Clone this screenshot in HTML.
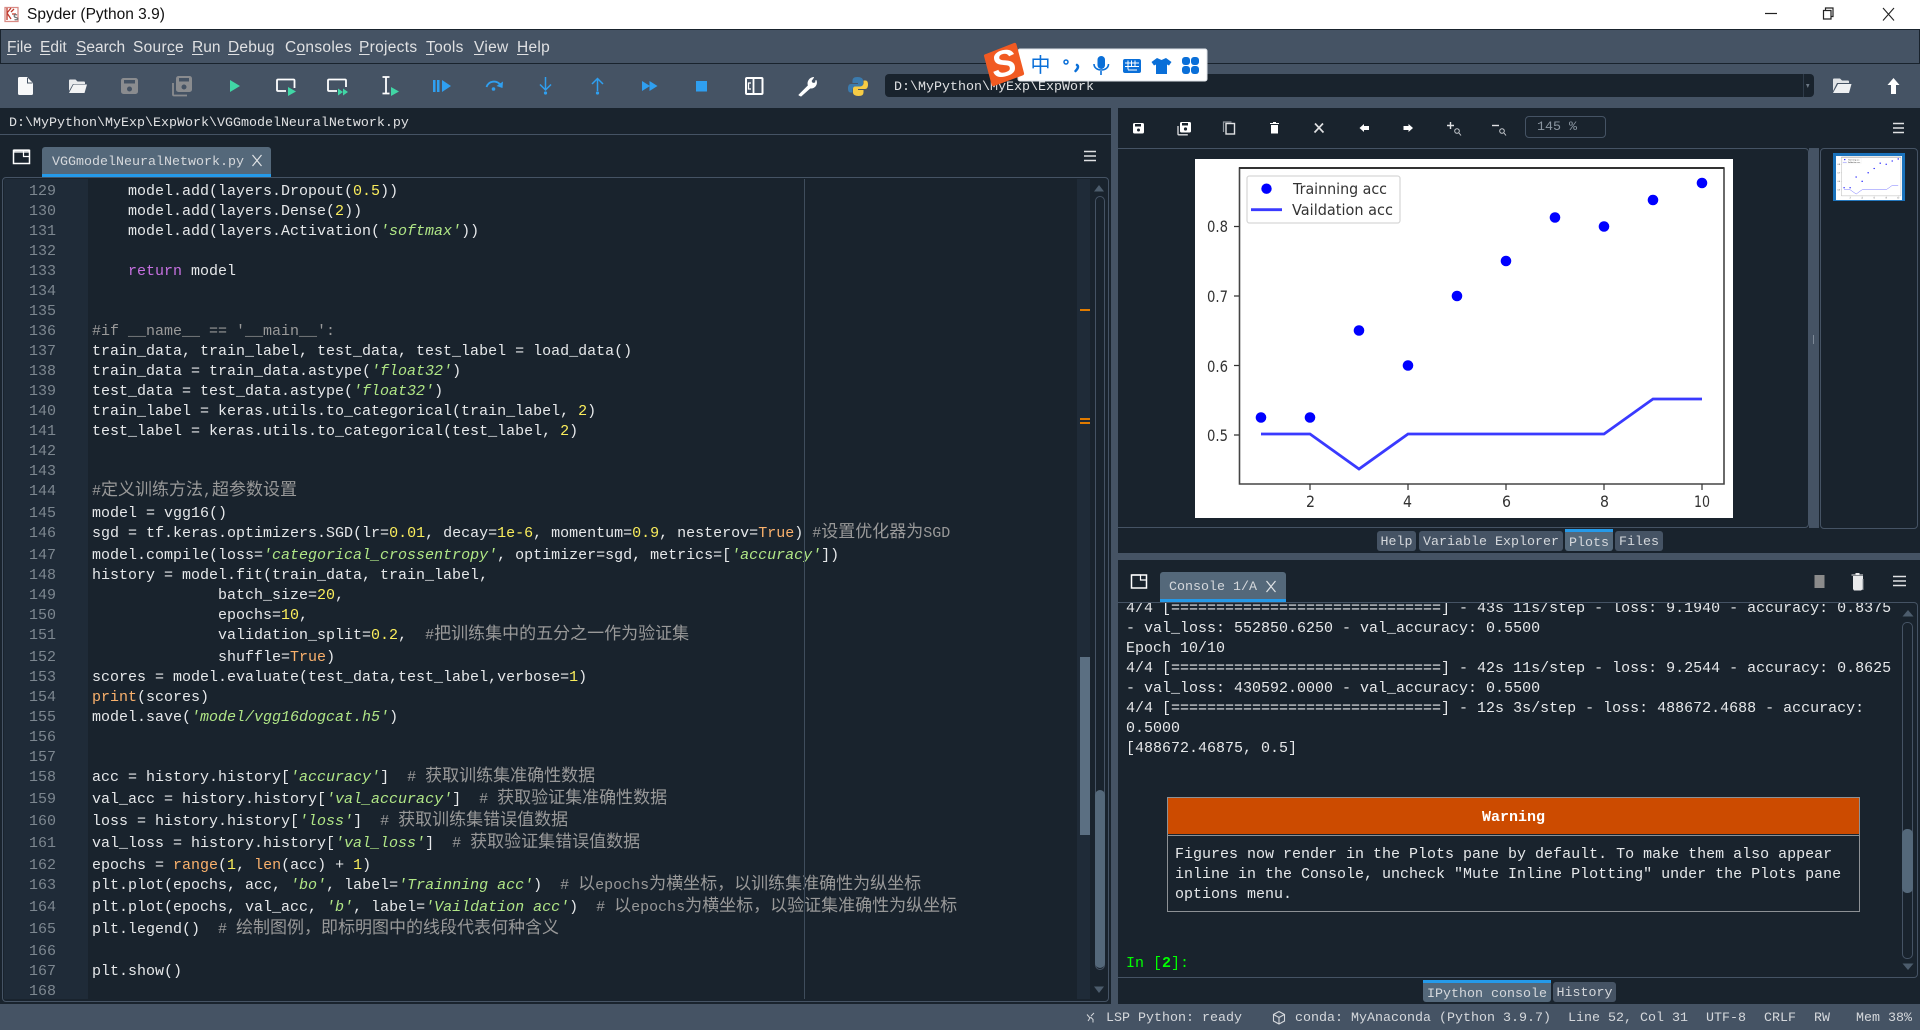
<!DOCTYPE html>
<html><head><meta charset="utf-8"><title>Spyder (Python 3.9)</title>
<style>
html,body{margin:0;padding:0;width:1920px;height:1030px;overflow:hidden;background:#19232d}
div,span{box-sizing:border-box}
.a{position:absolute}
.m{font-family:"Liberation Mono","DejaVu Sans Mono",monospace}
.ui{font-family:"Liberation Sans",sans-serif}
.menu span{position:absolute;top:38px;font:15.5px/20px "Liberation Sans",sans-serif;color:#e0e1e3;white-space:pre}
.menu u{text-underline-offset:2px}
#code{position:absolute;left:0;top:182px;width:1076px;height:817px;overflow:hidden;font:15px/20px "Liberation Mono",monospace;color:#e6e8ea}
.l{position:relative;height:20px;line-height:20px;padding-left:92px;white-space:pre}
.l.x{height:22px}
.l i.g{position:absolute;left:0;width:56px;text-align:right;font-style:normal;color:#7d8790}
.s{color:#b0e686;font-style:italic}
.k{color:#c670e0}
.b{color:#fab16c}
.n{color:#faed5c}
.c{color:#999}
.z{font-family:"Noto Sans CJK SC","WenQuanYi Zen Hei",sans-serif;font-size:17px;line-height:0;color:#999}
.tab{position:absolute;background:#455364;border-radius:3px 3px 0 0;font:13.33px/24px "Liberation Mono",monospace;color:#d5d8dc;text-align:center;white-space:pre;overflow:hidden}
.st{position:absolute;top:1009px;font:13.33px/20px "Liberation Mono",monospace;color:#d5d8dc;white-space:pre}
#con{position:absolute;left:1126px;top:603px;width:770px;height:372px;overflow:hidden;font:15px/20px "Liberation Mono",monospace;color:#e6e8ea}
#con div{position:relative;top:-4px;height:20px;white-space:pre}
</style></head>
<body>
<!-- title -->
<div class="a" style="left:0;top:0;width:1920px;height:29px;background:#fff"></div>
<div class="a ui" style="left:27px;top:5px;font-size:15.5px;line-height:20px;color:#111;white-space:pre">Spyder (Python 3.9)</div>
<!-- menu -->
<div class="a" style="left:0;top:29px;width:1920px;height:79px;background:#455364"></div>
<div class="a" style="left:0;top:29px;width:1920px;height:1px;background:#19232d"></div>
<div class="a" style="left:0;top:63px;width:1920px;height:1px;background:#19232d"></div>
<div class="a" style="left:0;top:29px;width:1px;height:35px;background:#19232d"></div>
<div class="a" style="left:1919px;top:29px;width:1px;height:35px;background:#19232d"></div>
<div class="menu">
<span style="left:7px"><u>F</u>ile</span>
<span style="left:40px"><u>E</u>dit</span>
<span style="left:76px"><u>S</u>earch</span>
<span style="left:133px;letter-spacing:.3px">Sour<u>c</u>e</span>
<span style="left:192px"><u>R</u>un</span>
<span style="left:228px;letter-spacing:.2px"><u>D</u>ebug</span>
<span style="left:285px;letter-spacing:.3px">C<u>o</u>nsoles</span>
<span style="left:359px;letter-spacing:.3px"><u>P</u>rojects</span>
<span style="left:426px;letter-spacing:.3px"><u>T</u>ools</span>
<span style="left:474px;letter-spacing:.3px"><u>V</u>iew</span>
<span style="left:517px;letter-spacing:.3px"><u>H</u>elp</span>
</div>
<!-- working dir -->
<div class="a m" style="left:885px;top:74px;width:929px;height:23px;background:#19232d;border-radius:4px;color:#e0e1e3;font-size:13.33px;line-height:27px;padding-left:9px;white-space:pre">D:\MyPython\MyExp\ExpWork</div>
<div class="a" style="left:1803px;top:74px;width:1px;height:23px;background:#2e3b49"></div>
<!-- path bar -->
<div class="a m" style="left:9px;top:114px;font-size:13.33px;line-height:20px;color:#e0e1e3;white-space:pre">D:\MyPython\MyExp\ExpWork\VGGmodelNeuralNetwork.py</div>
<div class="a" style="left:0;top:134px;width:1111px;height:1px;background:#455364"></div>
<!-- splitters -->
<div class="a" style="left:1111px;top:108px;width:7px;height:896px;background:#455364"></div>
<!-- editor tab -->
<div class="tab" style="left:42px;top:147px;width:229px;height:30px;background:#54687a;border-bottom:3px solid #259ae9;line-height:32px;text-align:left;padding-left:10px;color:#d5d8dc">VGGmodelNeuralNetwork.py</div>
<!-- editor frame -->
<div class="a" style="left:2px;top:177px;width:1107px;height:825px;border:1px solid #455364;border-radius:4px"></div>
<div class="a" style="left:4px;top:179px;width:84px;height:820px;background:#1f2b38"></div>
<div class="a" style="left:1077px;top:179px;width:13px;height:820px;background:#1f2b38"></div>
<div id="code">
<div class="l"><i class="g">129</i>    model.add(layers.Dropout(<span class="n">0.5</span>))</div>
<div class="l"><i class="g">130</i>    model.add(layers.Dense(<span class="n">2</span>))</div>
<div class="l"><i class="g">131</i>    model.add(layers.Activation(<span class="s">'softmax'</span>))</div>
<div class="l"><i class="g">132</i></div>
<div class="l"><i class="g">133</i>    <span class="k">return</span> model</div>
<div class="l"><i class="g">134</i></div>
<div class="l"><i class="g">135</i></div>
<div class="l"><i class="g">136</i><span class="c">#if __name__ == '__main__':</span></div>
<div class="l"><i class="g">137</i>train_data, train_label, test_data, test_label = load_data()</div>
<div class="l"><i class="g">138</i>train_data = train_data.astype(<span class="s">'float32'</span>)</div>
<div class="l"><i class="g">139</i>test_data = test_data.astype(<span class="s">'float32'</span>)</div>
<div class="l"><i class="g">140</i>train_label = keras.utils.to_categorical(train_label, <span class="n">2</span>)</div>
<div class="l"><i class="g">141</i>test_label = keras.utils.to_categorical(test_label, <span class="n">2</span>)</div>
<div class="l"><i class="g">142</i></div>
<div class="l"><i class="g">143</i></div>
<div class="l x"><i class="g">144</i><span class="c">#<span class="z">定义训练方法</span>,<span class="z">超参数设置</span></span></div>
<div class="l"><i class="g">145</i>model = vgg16()</div>
<div class="l x"><i class="g">146</i>sgd = tf.keras.optimizers.SGD(lr=<span class="n">0.01</span>, decay=<span class="n">1e-6</span>, momentum=<span class="n">0.9</span>, nesterov=<span class="b">True</span>) <span class="c">#<span class="z">设置优化器为</span>SGD</span></div>
<div class="l"><i class="g">147</i>model.compile(loss=<span class="s">'categorical_crossentropy'</span>, optimizer=sgd, metrics=[<span class="s">'accuracy'</span>])</div>
<div class="l"><i class="g">148</i>history = model.fit(train_data, train_label,</div>
<div class="l"><i class="g">149</i>              batch_size=<span class="n">20</span>,</div>
<div class="l"><i class="g">150</i>              epochs=<span class="n">10</span>,</div>
<div class="l x"><i class="g">151</i>              validation_split=<span class="n">0.2</span>,  <span class="c">#<span class="z">把训练集中的五分之一作为验证集</span></span></div>
<div class="l"><i class="g">152</i>              shuffle=<span class="b">True</span>)</div>
<div class="l"><i class="g">153</i>scores = model.evaluate(test_data,test_label,verbose=<span class="n">1</span>)</div>
<div class="l"><i class="g">154</i><span class="b">print</span>(scores)</div>
<div class="l"><i class="g">155</i>model.save(<span class="s">'model/vgg16dogcat.h5'</span>)</div>
<div class="l"><i class="g">156</i></div>
<div class="l"><i class="g">157</i></div>
<div class="l x"><i class="g">158</i>acc = history.history[<span class="s">'accuracy'</span>]  <span class="c"># <span class="z">获取训练集准确性数据</span></span></div>
<div class="l x"><i class="g">159</i>val_acc = history.history[<span class="s">'val_accuracy'</span>]  <span class="c"># <span class="z">获取验证集准确性数据</span></span></div>
<div class="l x"><i class="g">160</i>loss = history.history[<span class="s">'loss'</span>]  <span class="c"># <span class="z">获取训练集错误值数据</span></span></div>
<div class="l x"><i class="g">161</i>val_loss = history.history[<span class="s">'val_loss'</span>]  <span class="c"># <span class="z">获取验证集错误值数据</span></span></div>
<div class="l"><i class="g">162</i>epochs = <span class="b">range</span>(<span class="n">1</span>, <span class="b">len</span>(acc) + <span class="n">1</span>)</div>
<div class="l x"><i class="g">163</i>plt.plot(epochs, acc, <span class="s">'bo'</span>, label=<span class="s">'Trainning acc'</span>)  <span class="c"># <span class="z">以</span>epochs<span class="z">为横坐标，以训练集准确性为纵坐标</span></span></div>
<div class="l x"><i class="g">164</i>plt.plot(epochs, val_acc, <span class="s">'b'</span>, label=<span class="s">'Vaildation acc'</span>)  <span class="c"># <span class="z">以</span>epochs<span class="z">为横坐标，以验证集准确性为纵坐标</span></span></div>
<div class="l x"><i class="g">165</i>plt.legend()  <span class="c"># <span class="z">绘制图例，即标明图中的线段代表何种含义</span></span></div>
<div class="l"><i class="g">166</i></div>
<div class="l"><i class="g">167</i>plt.show()</div>
<div class="l"><i class="g">168</i></div>
</div>
<div class="a" style="left:804px;top:179px;width:1px;height:820px;background:#3f4d5c"></div>
<!-- flags and scrollbars -->
<div class="a" style="left:1080px;top:657px;width:10px;height:178px;background:#5b6f82"></div>
<div class="a" style="left:1080px;top:309px;width:10px;height:2px;background:#e07b00"></div>
<div class="a" style="left:1080px;top:418px;width:10px;height:2px;background:#e07b00"></div>
<div class="a" style="left:1080px;top:422px;width:10px;height:2px;background:#e07b00"></div>
<div class="a" style="left:1095px;top:196px;width:10px;height:774px;border:1px solid #455364;border-radius:5px"></div>
<div class="a" style="left:1095px;top:790px;width:10px;height:178px;background:#54687a;border-radius:5px"></div>
<!-- plots pane -->
<div class="a m" style="left:1525px;top:116px;width:81px;height:22px;border:1px solid #455364;border-radius:4px;font-size:13.33px;line-height:22px;color:#8b96a1;padding-left:11px;white-space:pre">145 %</div>
<div class="a" style="left:1118px;top:148px;width:691px;height:380px;border:1px solid #455364;border-left:0;border-radius:0 4px 4px 0"></div>
<div class="a" style="left:1809px;top:148px;width:10px;height:380px;background:#455364"></div>
<div class="a" style="left:1820px;top:148px;width:98px;height:381px;border:1px solid #455364;border-radius:4px"></div>
<div class="a" style="left:1813px;top:335px;width:1px;height:9px;background:#7c8896"></div>
<div class="a" style="left:1833px;top:153px;width:72px;height:48px;background:#fff;border:3px solid #1a72bb"></div>
<div class="tab" style="left:1377px;top:531px;width:39px;height:20px;border-radius:3px">Help</div>
<div class="tab" style="left:1419px;top:531px;width:144px;height:20px;border-radius:3px">Variable Explorer</div>
<div class="tab" style="left:1565px;top:529px;width:48px;height:22px;background:#54687a;border-top:3px solid #259ae9;border-radius:0 0 3px 3px;line-height:23px">Plots</div>
<div class="tab" style="left:1615px;top:531px;width:48px;height:20px;border-radius:3px">Files</div>
<div class="a" style="left:1118px;top:553px;width:802px;height:7px;background:#455364"></div>
<!-- console -->
<div class="tab" style="left:1160px;top:572px;width:126px;height:30px;background:#54687a;border-bottom:3px solid #259ae9;line-height:32px;text-align:left;padding-left:9px">Console 1/A</div>
<div class="a" style="left:1118px;top:602px;width:800px;height:376px;border:1px solid #455364;border-left:0;border-radius:0 4px 4px 0"></div>
<div id="con">
<div>4/4 [==============================] - 43s 11s/step - loss: 9.1940 - accuracy: 0.8375</div>
<div>- val_loss: 552850.6250 - val_accuracy: 0.5500</div>
<div>Epoch 10/10</div>
<div>4/4 [==============================] - 42s 11s/step - loss: 9.2544 - accuracy: 0.8625</div>
<div>- val_loss: 430592.0000 - val_accuracy: 0.5500</div>
<div>4/4 [==============================] - 12s 3s/step - loss: 488672.4688 - accuracy:</div>
<div>0.5000</div>
<div>[488672.46875, 0.5]</div>
</div>
<div class="a" style="left:1167px;top:797px;width:693px;height:115px;border:1px solid #8d9195"></div>
<div class="a m" style="left:1168px;top:798px;width:691px;height:36px;background:#cc4b00;color:#fff;font-size:15px;font-weight:bold;line-height:40px;text-align:center">Warning</div>
<div class="a" style="left:1168px;top:835px;width:691px;height:1px;background:#8d9195"></div>
<div class="a m" style="left:1175px;top:845px;width:680px;font-size:15px;line-height:20px;color:#e6e8ea;white-space:pre">Figures now render in the Plots pane by default. To make them also appear
inline in the Console, uncheck "Mute Inline Plotting" under the Plots pane
options menu.</div>
<div class="a m" style="left:1126px;top:954px;font-size:15px;line-height:20px;color:#00ff00;white-space:pre">In [<b>2</b>]:</div>
<div class="a" style="left:1902px;top:622px;width:11px;height:337px;border:1px solid #455364;border-radius:5px"></div>
<div class="a" style="left:1902px;top:829px;width:11px;height:64px;background:#54687a;border-radius:5px"></div>
<div class="tab" style="left:1423px;top:980px;width:128px;height:22px;background:#54687a;border-top:3px solid #259ae9;border-radius:0 0 3px 3px;line-height:23px">IPython console</div>
<div class="tab" style="left:1553px;top:982px;width:63px;height:20px;border-radius:3px">History</div>
<!-- status -->
<div class="a" style="left:0;top:1004px;width:1920px;height:26px;background:#455364"></div>
<div class="st" style="left:1106px">LSP Python: ready</div>
<div class="st" style="left:1295px">conda: MyAnaconda (Python 3.9.7)</div>
<div class="st" style="left:1568px">Line 52, Col 31</div>
<div class="st" style="left:1706px">UTF-8</div>
<div class="st" style="left:1764px">CRLF</div>
<div class="st" style="left:1814px">RW</div>
<div class="st" style="left:1856px">Mem 38%</div>

<!-- icons + chart -->
<svg class="a" style="left:0;top:0" width="1920" height="1030" viewBox="0 0 1920 1030" xmlns="http://www.w3.org/2000/svg">
<!-- app icon -->
<g fill="none" stroke="#c0392b" stroke-width="1.3"><path d="M5 7.500h13v14H5z" stroke="#d98b85"/><path d="M7 8v12M7 13l4-5M7 13l4 6M14 9l-3 3M12 14h4"/></g>
<path d="M17 15c-3-1.500-4 2-1 2.500s2 3-1.500 2" fill="none" stroke="#777" stroke-width="1.300"/>
<!-- window controls -->
<path d="M1765 13.500h12" stroke="#222" stroke-width="1.200"/>
<path d="M1823.500 10.500h7.500v8.500h-7.500zM1825.500 10.500v-2.500h7.500v8.500h-2" fill="none" stroke="#222" stroke-width="1.200"/>
<path d="M1883 8l11 12.500M1894 8l-11 12.500" stroke="#222" stroke-width="1.100"/>
<!-- toolbar -->
<path d="M19.500 77H27l6 6v10.500a1.500 1.500 0 0 1-1.500 1.500h-12a1.500 1.500 0 0 1-1.500-1.500v-15A1.500 1.500 0 0 1 19.500 77z" fill="#f7f8f9"/>
<path d="M27.500 78v5h5" fill="none" stroke="#455364" stroke-width="1"/>
<path d="M69 91V80.500a1 1 0 0 1 1-1h5.500l2 2H84a1 1 0 0 1 1 1v1.500H73z" fill="#e8eaec"/>
<path d="M73.500 84.500H87L84.500 93H69z" fill="#f2f3f4"/>
<rect x="121" y="78" width="17" height="16" rx="2.500" fill="#8a8c8f"/>
<rect x="124" y="80" width="11" height="3.500" fill="#455364"/><circle cx="129.500" cy="89" r="2.500" fill="#455364"/>
<path d="M173 83v11.500a1 1 0 0 0 1 1h13" fill="none" stroke="#8a8c8f" stroke-width="1.800"/>
<rect x="176" y="76" width="16" height="16" rx="2.500" fill="#8a8c8f"/>
<rect x="179" y="78" width="10" height="3.500" fill="#455364"/><circle cx="184" cy="87" r="2.500" fill="#455364"/>
<path d="M230 80l10 6-10 6z" fill="#41d6a5"/>
<path d="M286 91h-8a1 1 0 0 1-1-1v-9.500a1 1 0 0 1 1-1h15.500a1 1 0 0 1 1 1V88" fill="none" stroke="#fff" stroke-width="1.800"/>
<path d="M288 87l8 4.500-8 4.500z" fill="#41d6a5"/>
<path d="M337 91h-8a1 1 0 0 1-1-1v-9.500a1 1 0 0 1 1-1h16a1 1 0 0 1 1 1V87" fill="none" stroke="#fff" stroke-width="1.800"/>
<path d="M338 88.500l5 3.500-5 3.500zM343 88.500l5 3.500-5 3.500z" fill="#41d6a5"/>
<path d="M382.500 77h7M382.500 93.500h7M386 77v16.500" fill="none" stroke="#fff" stroke-width="1.800"/>
<path d="M391 87l8 4.500-8 4.500z" fill="#41d6a5"/>
<path d="M433 80h2.500v12H433zM437 80h2.500v12H437zM442 80l9 6-9 6z" fill="#2f9ff0"/>
<path d="M486.500 87c2-6 10-7.500 14-2" fill="none" stroke="#2f9ff0" stroke-width="1.800"/>
<path d="M503 81.500l-.5 6.500-6-2z" fill="#2f9ff0"/><circle cx="493.500" cy="89" r="1.800" fill="#2f9ff0"/>
<path d="M545.500 77v13M540 84.500l5.500 5.500 5.500-5.500" fill="none" stroke="#2f9ff0" stroke-width="1.500"/><circle cx="545.500" cy="93" r="1.600" fill="#2f9ff0"/>
<path d="M597.500 91V79M592 84l5.500-5.500L603 84" fill="none" stroke="#2f9ff0" stroke-width="1.500"/><circle cx="597.500" cy="93" r="1.600" fill="#2f9ff0"/>
<path d="M642 81l8 5-8 5zM649.500 81l8 5-8 5z" fill="#2f9ff0"/>
<rect x="696" y="81" width="11" height="10.500" fill="#2f9ff0"/>
<rect x="746" y="78" width="16.500" height="16" rx="1" fill="none" stroke="#fff" stroke-width="2"/>
<path d="M753.500 78v16" stroke="#fff" stroke-width="1.800"/>
<path d="M751 83h-2.500v6h2.500" fill="none" stroke="#fff" stroke-width="1.300"/>
<path d="M799 95l9.500-9.500c-1.500-3.500 1-7.500 5-8l-2.500 3.500 1.500 2.500 3-.5 .5-2.500c1.500 3.500-1 8-6 7.500L801 96z" fill="#fff" stroke="#fff" stroke-width="1" stroke-linejoin="round"/>
<path d="M857.500 77c-4 0-5 1.500-5 4v2h5.500v1h-7c-2.500 0-3 2.500-3 4.500s.5 4 2.500 4h2v-2.500c0-2 1.500-3.500 3.500-3.500h4.500c1.800 0 2.500-1 2.500-2.500v-3.500c0-2-2-3.500-5.500-3.500z" fill="#3b7bae"/>
<path d="M858.500 96c4 0 5-1.500 5-4v-2h-5.500v-1h7c2.500 0 3-2.500 3-4.500s-.5-4-2.500-4h-2v2.500c0 2-1.500 3.500-3.500 3.500h-4.500c-1.800 0-2.500 1-2.500 2.500v3.500c0 2 2 3.500 5.500 3.500z" fill="#f6cc45"/>
<path d="M1806 84l3.500 0-1.700 4z" fill="#6c7885"/>
<path d="M1833 91V79.500a1 1 0 0 1 1-1h6l2 2h6a1 1 0 0 1 1 1V83h-12z" fill="#e0e3e6"/>
<path d="M1838 84h13.500l-2.500 9h-16z" fill="#eef0f2"/>
<path d="M1893.500 78l6 7h-3.500v9h-5v-9h-3.500z" fill="#fff"/>
<!-- plots toolbar -->
<rect x="1133" y="123" width="11" height="10.500" rx="1.500" fill="#fff"/><rect x="1135" y="124" width="6" height="2.500" fill="#19232d"/><circle cx="1138.500" cy="130" r="1.500" fill="#19232d"/>
<path d="M1178 126v8a.8.8 0 0 0 .8.800h9" fill="none" stroke="#e0e1e3" stroke-width="1.300"/>
<rect x="1180" y="122" width="11" height="10.500" rx="1.500" fill="#fff"/><rect x="1182" y="123" width="6" height="2.500" fill="#19232d"/><circle cx="1185.500" cy="129" r="1.600" fill="#19232d"/>
<path d="M1223.500 132v-10h8" fill="none" stroke="#8e959c" stroke-width="1.200"/><rect x="1226" y="123.500" width="8.500" height="10.500" fill="none" stroke="#e0e1e3" stroke-width="1.400"/>
<path d="M1271 125h7v8.500h-7z" fill="#fff"/><path d="M1270 123h9v1h-9zM1273 122h3v1h-3z" fill="#fff"/>
<path d="M1315 123.500l8.500 9M1323 123.500l-8.500 9" stroke="#e0e1e3" stroke-width="1.700"/>
<path d="M1359.500 128l4.500-4v2h5v4h-5v2z" fill="#fff"/>
<path d="M1413 128l-4.500-4v2h-5v4h5v2z" fill="#fff"/>
<path d="M1447 125.500h7M1450.500 122v7" stroke="#e0e1e3" stroke-width="1.400"/><circle cx="1457" cy="131" r="2.300" fill="none" stroke="#c5c9ce" stroke-width="1"/><path d="M1459 133l2 2.500" stroke="#c5c9ce"/>
<path d="M1492 125.500h7" stroke="#e0e1e3" stroke-width="1.400"/><circle cx="1502" cy="131" r="2.300" fill="none" stroke="#c5c9ce" stroke-width="1"/><path d="M1504 133l2 2.500" stroke="#c5c9ce"/>
<!-- hamburgers -->
<g stroke="#e0e1e3" stroke-width="1.500"><path d="M1084 151.500h12M1084 156h12M1084 160.500h12"/><path d="M1893 123.500h11M1893 128h11M1893 132.500h11"/><path d="M1893 576.500h13M1893 581h13M1893 585.500h13"/></g>
<!-- new tab icons -->
<path d="M13.500 150.500h16v13h-16z" fill="none" stroke="#fff" stroke-width="1.500"/>
<path d="M14 150h15v2H14zM23.500 150v6.500h6" fill="none" stroke="#fff" stroke-width="1.200"/>
<path d="M1131.500 575h15v13h-15z" fill="none" stroke="#fff" stroke-width="1.500"/><path d="M1132 575h8.500v5h6" fill="none" stroke="#fff" stroke-width="1.200"/>
<!-- close x -->
<path d="M252.500 155l9 11M261.500 155l-9 11" stroke="#dfe2e5" stroke-width="1.200"/>
<path d="M1266.500 581l9 11M1275.500 581l-9 11" stroke="#dfe2e5" stroke-width="1.200"/>
<!-- console toolbar -->
<rect x="1814.500" y="575" width="10" height="13" fill="#8b8b8b"/>
<path d="M1853 576h10v13l-2 1.500h-7l-1-1.500z" fill="#e9eaec"/><path d="M1851.500 574.500h11.500v1h-11.500zM1855.500 573h4v1.500h-4z" fill="#e9eaec"/><path d="M1863 579v11" stroke="#8e959c"/>
<!-- scrollbar arrows -->
<g fill="#4c5c6c"><path d="M1099 185l5 6.500h-10z"/><path d="M1099 993l5-6.500h-10z"/><path d="M1908 610l5.500 6.500h-11z"/><path d="M1908 970l5.500-6.500h-11z"/></g>
<!-- status icons -->
<path d="M1087 1014.500l3 3.500-2 3M1094 1013l-3 3M1090.500 1017l2.500 2.500v3" fill="none" stroke="#d5d8dc" stroke-width="1"/>
<path d="M1279 1011.500l5.500 3v6.500l-5.500 3-5.500-3v-6.500zM1273.500 1014.500l5.500 3 5.500-3M1279 1017.500v6.500" fill="none" stroke="#d5d8dc" stroke-width="1.100"/>
<!-- chart -->
<g id="fig">
<rect x="1195" y="159" width="538" height="359" fill="#fff"/>
<path d="M1239.500 168v316H1724V168z" fill="none" stroke="#454545" stroke-width="1.600"/>
<path d="M1239 168h485" stroke="#333" stroke-width="2"/>
<path d="M1234 226.500h5M1234 296h5M1234 365.500h5M1234 435h5M1310 484v6M1408 484v6M1506 484v6M1604 484v6M1702 484v6" stroke="#333" stroke-width="1.200"/>
<g font-family="DejaVu Sans,sans-serif" font-size="16" fill="#333">
<text x="1207" y="232" textLength="21" lengthAdjust="spacingAndGlyphs">0.8</text>
<text x="1207" y="302" textLength="21" lengthAdjust="spacingAndGlyphs">0.7</text>
<text x="1207" y="372" textLength="21" lengthAdjust="spacingAndGlyphs">0.6</text>
<text x="1207" y="441" textLength="21" lengthAdjust="spacingAndGlyphs">0.5</text>
<text x="1306" y="507" textLength="9" lengthAdjust="spacingAndGlyphs">2</text>
<text x="1403" y="507" textLength="9" lengthAdjust="spacingAndGlyphs">4</text>
<text x="1502" y="507" textLength="9" lengthAdjust="spacingAndGlyphs">6</text>
<text x="1600" y="507" textLength="9" lengthAdjust="spacingAndGlyphs">8</text>
<text x="1694" y="507" textLength="16" lengthAdjust="spacingAndGlyphs">10</text>
</g>
<rect x="1247" y="176" width="153" height="47" rx="2.500" fill="#fff" stroke="#d8d8d8" stroke-width="1.300"/>
<circle cx="1266.500" cy="188.700" r="5.200" fill="#0000ff"/>
<path d="M1251 209.700h31" stroke="#3a3aff" stroke-width="2.800"/>
<g font-family="DejaVu Sans,sans-serif" font-size="15" fill="#333">
<text x="1293" y="194" textLength="94" lengthAdjust="spacingAndGlyphs">Trainning acc</text>
<text x="1292" y="215" textLength="101" lengthAdjust="spacingAndGlyphs">Vaildation acc</text>
</g>
<g fill="#0000ff">
<circle cx="1261" cy="417.500" r="5.300"/><circle cx="1310" cy="417.500" r="5.300"/><circle cx="1359" cy="330.500" r="5.300"/><circle cx="1408" cy="365.500" r="5.300"/><circle cx="1457" cy="296" r="5.300"/><circle cx="1506" cy="261" r="5.300"/><circle cx="1555" cy="217.500" r="5.300"/><circle cx="1604" cy="226.500" r="5.300"/><circle cx="1653" cy="200" r="5.300"/><circle cx="1702" cy="183" r="5.300"/>
</g>
<path d="M1261 434H1310L1359 469 1408 434H1604L1653 399H1702" fill="none" stroke="#3a3aff" stroke-width="2.800"/>
</g>
<g transform="translate(1836 156) scale(.1227) translate(-1195 -159)"><use href="#fig"/></g>
<!-- sogou -->
<rect x="1018" y="49" width="189" height="32" rx="2" fill="#fff" stroke="#dfe3e8"/>
<path d="M986 54l28-11c1.500-.5 2 0 2.500 1.500L1024 73c.3 1.300 0 2-1.500 2.500L994 86c-1.500.5-2 0-2.500-1.500L984 56c-.3-1 .500-1.700 2-2z" fill="#f15a22"/>
<text x="1004" y="76" font-family="Liberation Sans,sans-serif" font-weight="bold" font-style="italic" font-size="37" fill="#fff" text-anchor="middle" transform="rotate(-12 1004 65)">S</text>
<text x="1040.500" y="72" font-family="Noto Sans CJK SC,sans-serif" font-size="20" fill="#0a6fd8" text-anchor="middle">中</text>
<circle cx="1066" cy="62" r="2" fill="none" stroke="#0a6fd8" stroke-width="1.500"/>
<path d="M1077 65c1.500 1 1.500 3-1.500 6" fill="none" stroke="#0a6fd8" stroke-width="2.500" stroke-linecap="round"/>
<rect x="1097.500" y="56" width="7.500" height="13" rx="3.700" fill="#0a6fd8"/>
<path d="M1094 64c0 8 14.500 8 14.500 0M1101 71v4" fill="none" stroke="#0a6fd8" stroke-width="1.600"/>
<rect x="1123" y="59" width="18" height="14" rx="2" fill="#0a6fd8"/>
<path d="M1125 63h14M1125 66.500h14M1128 70h9M1128 60.500v9M1131.500 60.500v6M1135 60.500v6" stroke="#fff" stroke-width="1"/>
<path d="M1157 58l4.500 2 4.500-2 5.500 4-2.500 3.500-2-1V74h-11V64.500l-2 1-2.500-3.500z" fill="#0a6fd8"/>
<g fill="#0a6fd8"><rect x="1182" y="57" width="8" height="8" rx="3"/><rect x="1191" y="57" width="8" height="8" rx="3"/><rect x="1182" y="66" width="8" height="8" rx="3"/><rect x="1191" y="66" width="8" height="8" rx="3"/></g>
</svg>
</body></html>
